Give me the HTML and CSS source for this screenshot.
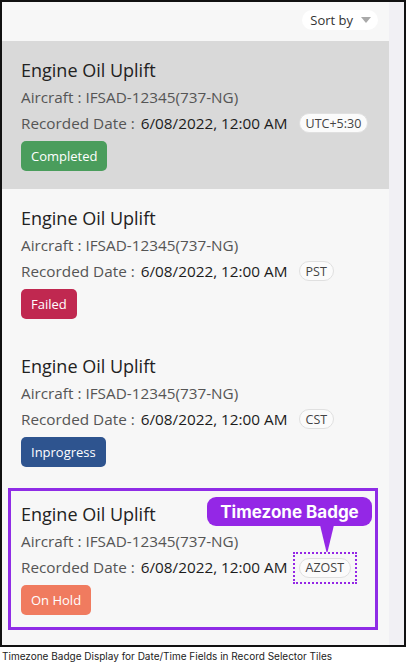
FILE: index.html
```html
<!DOCTYPE html>
<html lang="en">
<head>
<meta charset="utf-8">
<title>Record Selector Tiles</title>
<link rel="stylesheet" href="styles.css">
</head>
<body>
<div class="frame">
  <div class="main">
    <div class="header">
      <button class="sort">Sort by <span class="caret"></span></button>
    </div>
    <div class="tile selected">
      <div class="title">Engine Oil Uplift</div>
      <div class="meta">Aircraft : IFSAD-12345(737-NG)</div>
      <div class="date-row"><span class="label">Recorded Date :</span><span class="value">6/08/2022, 12:00 AM</span><span class="tz">UTC+5:30</span></div>
      <span class="status completed">Completed</span>
    </div>
    <div class="tile">
      <div class="title">Engine Oil Uplift</div>
      <div class="meta">Aircraft : IFSAD-12345(737-NG)</div>
      <div class="date-row"><span class="label">Recorded Date :</span><span class="value">6/08/2022, 12:00 AM</span><span class="tz">PST</span></div>
      <span class="status failed">Failed</span>
    </div>
    <div class="tile">
      <div class="title">Engine Oil Uplift</div>
      <div class="meta">Aircraft : IFSAD-12345(737-NG)</div>
      <div class="date-row"><span class="label">Recorded Date :</span><span class="value">6/08/2022, 12:00 AM</span><span class="tz">CST</span></div>
      <span class="status inprogress">Inprogress</span>
    </div>
    <div class="tile annotated">
      <div class="title">Engine Oil Uplift</div>
      <div class="meta">Aircraft : IFSAD-12345(737-NG)</div>
      <div class="date-row"><span class="label">Recorded Date :</span><span class="value">6/08/2022, 12:00 AM</span><span class="dotted"><span class="tz">AZOST</span></span></div>
      <span class="status onhold">On Hold</span>
      <div class="focus-box"></div>
      <div class="callout">Timezone Badge</div>
      <svg class="pointer" width="14" height="27" viewBox="0 0 14 27"><polygon points="0,0 14,0 7.5,27 6.5,27" fill="#9427e6"/></svg>
    </div>
  </div>
  <div class="rail"></div>
</div>
<p class="caption">Timezone Badge Display for Date/Time Fields in Record Selector Tiles</p>
</body>
</html>
```
FILE: styles.css
```css
* { box-sizing: border-box; }
body {
  margin: 0;
  background: #ffffff;
  font-family: "Open Sans", "Noto Sans", sans-serif;
}
.frame {
  width: 406px;
  height: 647px;
  border: 2px solid #111;
  display: flex;
  background: #f7f7f7;
}
.main {
  width: 387px;
  flex-shrink: 0;
  background: #f7f7f7;
}
.rail {
  width: 15px;
  flex-shrink: 0;
  background: #f1f0f4;
}
.header {
  height: 39px;
  display: flex;
  justify-content: flex-end;
  align-items: flex-start;
  padding: 8px 11px 0 0;
}
.sort {
  height: 20px;
  width: 76px;
  border: none;
  border-radius: 10px;
  background: #ffffff;
  font-family: inherit;
  font-size: 13px;
  color: #333;
  display: flex;
  align-items: center;
  justify-content: flex-end;
  gap: 8px;
  padding: 0 7px 0 0;
}
.caret {
  width: 0;
  height: 0;
  border-left: 5px solid transparent;
  border-right: 5px solid transparent;
  border-top: 6px solid #a9a9a9;
}
.tile {
  height: 148px;
  padding: 17px 19px 18px;
  position: relative;
}
.tile.selected { background: #d9d9d9; }
.title {
  font-size: 18px;
  line-height: 24px;
  color: #222;
}
.meta {
  margin-top: 4px;
  font-size: 15.3px;
  line-height: 22px;
  color: #555;
  white-space: nowrap;
}
.date-row {
  margin-top: 2px;
  height: 26px;
  display: flex;
  align-items: center;
  font-size: 15.3px;
  white-space: nowrap;
}
.date-row > * { flex-shrink: 0; }
.label { color: #555; }
.value { color: #1c1c1c; margin-left: 6px; }
.tz {
  margin-left: 11px;
  height: 20px;
  padding: 0 6px;
  border: 1px solid #e0e0e0;
  border-radius: 10px;
  background: #fbfbfb;
  font-size: 12.5px;
  color: #444;
  display: inline-flex;
  align-items: center;
}
.dotted {
  display: inline-flex;
  margin-left: 5px;
  margin-right: -6px;
  margin-top: 1px;
  padding: 4px;
  border: 2px dotted #9427e6;
}
.dotted .tz { margin-left: 0; }
.status {
  margin-top: 5px;
  display: inline-flex;
  align-items: center;
  height: 30px;
  padding: 0 10px;
  border-radius: 5px;
  color: #fff;
  font-size: 13px;
}
.completed { background: #4a9d5c; }
.failed { background: #c02850; }
.inprogress { background: #2e548f; }
.onhold { background: #f07b5f; }
.focus-box {
  position: absolute;
  left: 6px;
  top: 3px;
  width: 370px;
  height: 142px;
  border: 3px solid #8f2ce6;
  pointer-events: none;
}
.callout {
  position: absolute;
  left: 205px;
  top: 12px;
  width: 165px;
  height: 29px;
  border-radius: 9px;
  background: #9427e6;
  color: #fff;
  font-family: Inter, "Liberation Sans", sans-serif;
  font-weight: 700;
  font-size: 17px;
  display: flex;
  align-items: center;
  justify-content: center;
}
.pointer {
  position: absolute;
  left: 318px;
  top: 40px;
}
.caption {
  margin: 3px 0 0 2px;
  font-family: Inter, "Liberation Sans", sans-serif;
  font-size: 10px;
  color: #222;
}
```
